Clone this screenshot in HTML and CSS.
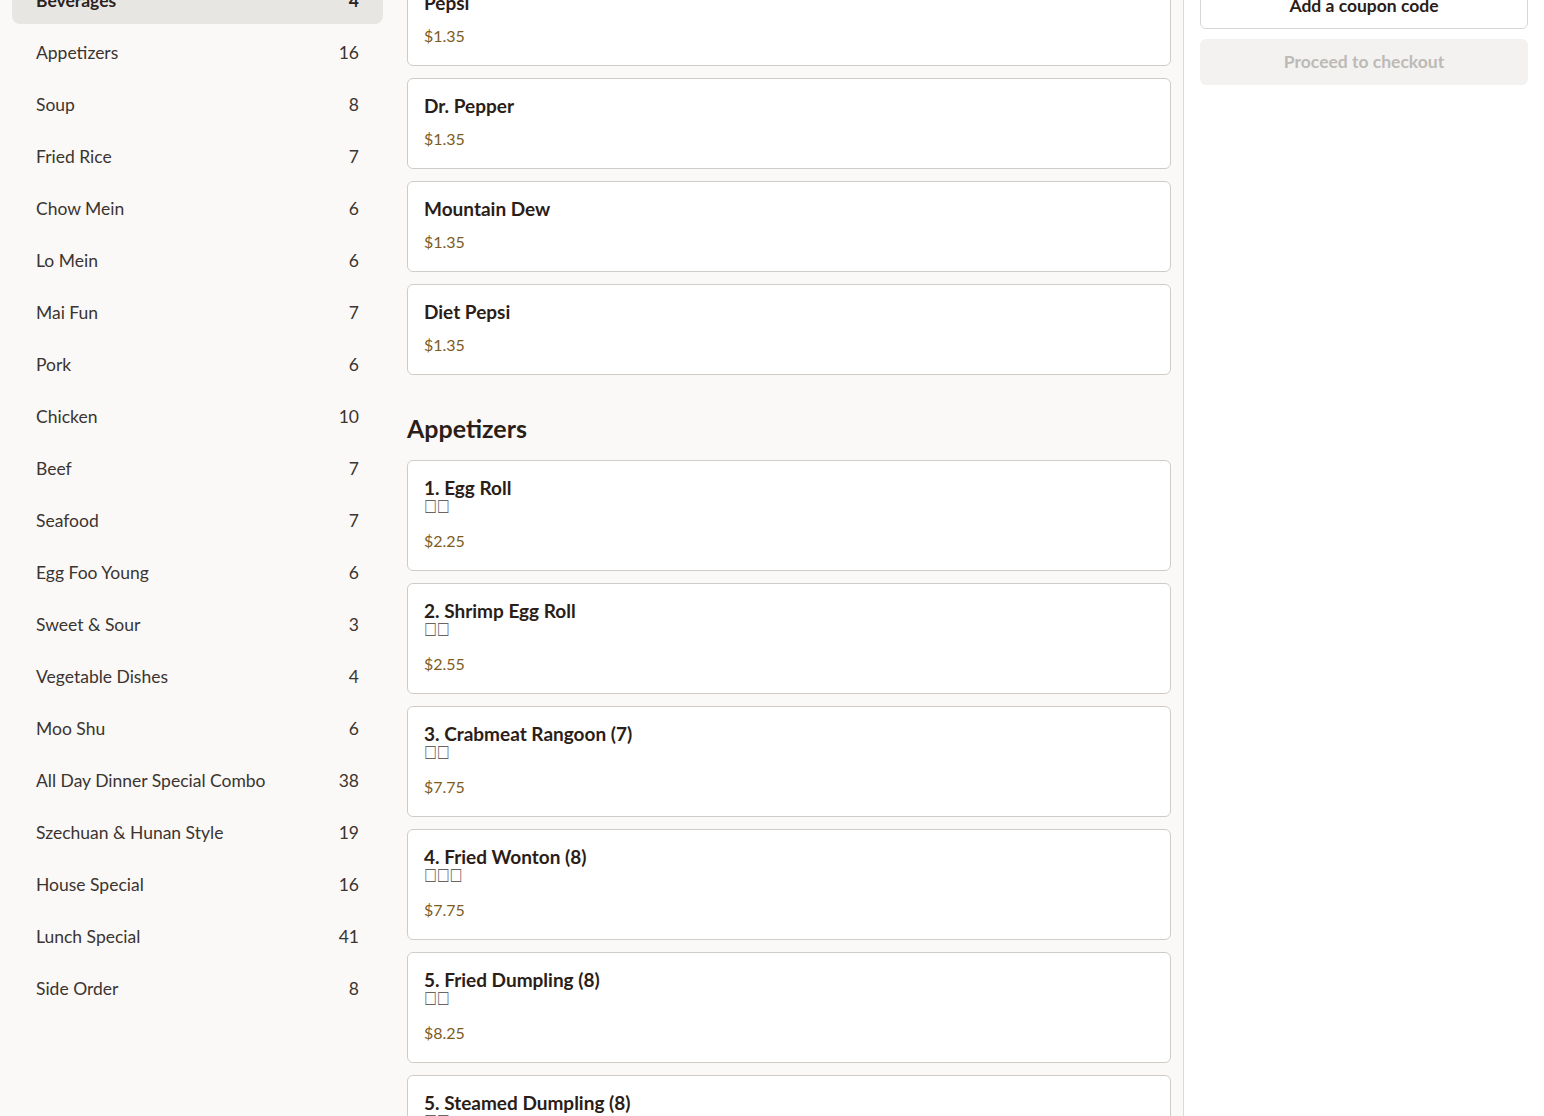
FILE: index.html
```html
<!DOCTYPE html>
<html lang="en">
<head>
<meta charset="utf-8">
<title>Menu</title>
<link rel="stylesheet" href="styles.css">
</head>
<body>
<div class="page">
  <aside class="sidebar">
    <ul class="cat-list">
      <li class="cat active"><span>Beverages</span><span>4</span></li>
      <li class="cat"><span>Appetizers</span><span>16</span></li>
      <li class="cat"><span>Soup</span><span>8</span></li>
      <li class="cat"><span>Fried Rice</span><span>7</span></li>
      <li class="cat"><span>Chow Mein</span><span>6</span></li>
      <li class="cat"><span>Lo Mein</span><span>6</span></li>
      <li class="cat"><span>Mai Fun</span><span>7</span></li>
      <li class="cat"><span>Pork</span><span>6</span></li>
      <li class="cat"><span>Chicken</span><span>10</span></li>
      <li class="cat"><span>Beef</span><span>7</span></li>
      <li class="cat"><span>Seafood</span><span>7</span></li>
      <li class="cat"><span>Egg Foo Young</span><span>6</span></li>
      <li class="cat"><span>Sweet &amp; Sour</span><span>3</span></li>
      <li class="cat"><span>Vegetable Dishes</span><span>4</span></li>
      <li class="cat"><span>Moo Shu</span><span>6</span></li>
      <li class="cat"><span>All Day Dinner Special Combo</span><span>38</span></li>
      <li class="cat"><span>Szechuan &amp; Hunan Style</span><span>19</span></li>
      <li class="cat"><span>House Special</span><span>16</span></li>
      <li class="cat"><span>Lunch Special</span><span>41</span></li>
      <li class="cat"><span>Side Order</span><span>8</span></li>
    </ul>
  </aside>

  <main class="menu">
    <div class="menu-inner">
      <section class="section">
        <div class="items">
          <div class="item"><div class="item-name">Pepsi</div><div class="item-price">$1.35</div></div>
          <div class="item"><div class="item-name">Dr. Pepper</div><div class="item-price">$1.35</div></div>
          <div class="item"><div class="item-name">Mountain Dew</div><div class="item-price">$1.35</div></div>
          <div class="item"><div class="item-name">Diet Pepsi</div><div class="item-price">$1.35</div></div>
        </div>
      </section>
      <section class="section">
        <h2 class="section-title">Appetizers</h2>
        <div class="items">
          <div class="item"><div class="item-name">1. Egg Roll</div><div class="item-sub"><span class="tofu">□□</span></div><div class="item-price">$2.25</div></div>
          <div class="item"><div class="item-name">2. Shrimp Egg Roll</div><div class="item-sub"><span class="tofu">□□</span></div><div class="item-price">$2.55</div></div>
          <div class="item"><div class="item-name">3. Crabmeat Rangoon (7)</div><div class="item-sub"><span class="tofu">□□</span></div><div class="item-price">$7.75</div></div>
          <div class="item"><div class="item-name">4. Fried Wonton (8)</div><div class="item-sub"><span class="tofu">□□□</span></div><div class="item-price">$7.75</div></div>
          <div class="item"><div class="item-name">5. Fried Dumpling (8)</div><div class="item-sub"><span class="tofu">□□</span></div><div class="item-price">$8.25</div></div>
          <div class="item"><div class="item-name">5. Steamed Dumpling (8)</div><div class="item-sub"><span class="tofu">□□</span></div><div class="item-price">$8.25</div></div>
        </div>
      </section>
    </div>
  </main>

  <aside class="cart">
    <div class="cart-inner">
      <button class="btn btn-coupon">Add a coupon code</button>
      <button class="btn btn-checkout" disabled>Proceed to checkout</button>
    </div>
  </aside>
</div>
</body>
</html>
```

FILE: styles.css
```css
* { box-sizing: border-box; }

html, body {
  margin: 0;
  padding: 0;
  height: 100%;
}

body {
  font-family: Lato, "Noto Sans", sans-serif;
  color: #2b2220;
  background: #faf9f7;
  overflow: hidden;
}

.page {
  display: grid;
  grid-template-columns: 395px 1fr 361px;
  height: 1116px;
  overflow: hidden;
}

/* Sidebar */
.sidebar {
  background: #faf9f7;
  padding: 0 12px;
  overflow: hidden;
}

.cat-list {
  list-style: none;
  margin: -24px 0 0;
  padding: 0;
  display: flex;
  flex-direction: column;
  gap: 4px;
}

.cat {
  height: 48px;
  padding: 0 24px;
  display: flex;
  align-items: center;
  justify-content: space-between;
  font-size: 17.5px;
  color: #3b3431;
  border-radius: 8px;
}

.cat.active {
  background: #e8e6e3;
  font-weight: 700;
  color: #2b2220;
}

/* Menu */
.menu {
  background: #faf9f7;
  padding: 0 12px;
  overflow: hidden;
}

.menu-inner {
  margin-top: -25px;
}

.section + .section {
  margin-top: 36px;
}

.section-title {
  margin: 0 0 15px;
  font-size: 25px;
  line-height: 34px;
  font-weight: 700;
  color: #2b1d17;
}

.items {
  display: flex;
  flex-direction: column;
  gap: 12px;
}

.item {
  background: #fff;
  border: 1px solid #cfccc8;
  border-radius: 6px;
  padding: 16px 16px 17px;
}

.item-name {
  font-size: 19px;
  line-height: 21px;
  font-weight: 700;
  color: #2b1d17;
}

.item-sub {
  height: 21px;
}

.tofu {
  display: inline-block;
  vertical-align: top;
  font-family: "DejaVu Sans", sans-serif;
  font-size: 13.5px;
  line-height: 11px;
  color: #6a6562;
  transform: scaleY(1.3);
  transform-origin: left top;
}

.item-price {
  margin-top: 10px;
  font-size: 16px;
  line-height: 24px;
  color: #7d5c1e;
}

.item-name + .item-price {
  margin-top: 11px;
}

/* Cart */
.cart {
  background: #fff;
  border-left: 1px solid #dcd9d6;
  padding: 0 16px;
  overflow: hidden;
}

.cart-inner {
  margin-top: -17px;
  display: flex;
  flex-direction: column;
  gap: 10px;
}

.btn {
  height: 46px;
  width: 100%;
  border-radius: 6px;
  font-family: inherit;
  font-size: 17.5px;
  font-weight: 700;
  line-height: 1;
  padding: 0;
}

.btn-coupon {
  background: #fff;
  border: 1px solid #d9d6d3;
  color: #2b1d17;
}

.btn-checkout {
  background: #f3f2f0;
  border: none;
  color: #bdbab6;
}
```
